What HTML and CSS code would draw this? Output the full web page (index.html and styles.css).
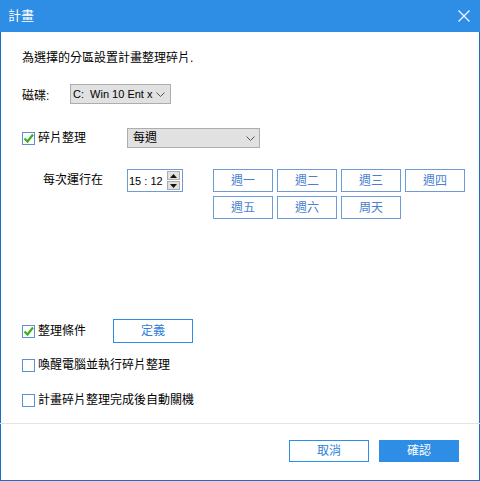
FILE: index.html
```html
<!DOCTYPE html>
<html lang="zh-Hant">
<head>
<meta charset="utf-8">
<title>計畫</title>
<link rel="stylesheet" href="styles.css">
</head>
<body>
<div class="window">
  <div class="titlebar">
    <span class="title">計畫</span>
    <svg class="close" width="12" height="12" viewBox="0 0 12 12"><path d="M0.5 0.5 L11.5 11.5 M11.5 0.5 L0.5 11.5" stroke="#fff" stroke-width="1.2" fill="none"/></svg>
  </div>
  <div class="content">
    <div class="intro">為選擇的分區設置計畫整理碎片.</div>
    <div class="row disk-row">
      <span class="disk-label">磁碟:</span>
      <div class="select disk-select">
        <span class="sel-text">C:&nbsp; Win 10 Ent x</span>
        <svg class="chev" width="9" height="5" viewBox="0 0 9 5"><path d="M0.5 0.5 L4.5 4.5 L8.5 0.5" stroke="#555" stroke-width="1" fill="none"/></svg>
      </div>
    </div>
    <div class="row defrag-row">
      <label class="check first-col">
        <span class="box"><svg width="13" height="13" viewBox="0 0 13 13"><path d="M2.5 6.5 L5.5 9.5 L11 2.5" stroke="#3cb01d" stroke-width="2.2" fill="none"/></svg></span>
        <span>碎片整理</span>
      </label>
      <div class="select freq-select">
        <span class="sel-text">每週</span>
        <svg class="chev" width="9" height="5" viewBox="0 0 9 5"><path d="M0.5 0.5 L4.5 4.5 L8.5 0.5" stroke="#555" stroke-width="1" fill="none"/></svg>
      </div>
    </div>
    <div class="row sched-row">
      <span class="run-label">每次運行在</span>
      <div class="spinner">
        <span class="time">15 : 12</span>
        <div class="spin-btns">
          <span class="spin up"><svg width="7" height="4" viewBox="0 0 7 4"><path d="M3.5 0 L7 4 L0 4 Z" fill="#111"/></svg></span>
          <span class="spin down"><svg width="7" height="4" viewBox="0 0 7 4"><path d="M0 0 L7 0 L3.5 4 Z" fill="#111"/></svg></span>
        </div>
      </div>
      <div class="days">
        <span class="day">週一</span>
        <span class="day">週二</span>
        <span class="day">週三</span>
        <span class="day">週四</span>
        <span class="day">週五</span>
        <span class="day">週六</span>
        <span class="day">周天</span>
      </div>
    </div>
    <div class="row cond-row">
      <label class="check">
        <span class="box"><svg width="13" height="13" viewBox="0 0 13 13"><path d="M2.5 6.5 L5.5 9.5 L11 2.5" stroke="#3cb01d" stroke-width="2.2" fill="none"/></svg></span>
        <span>整理條件</span>
      </label>
      <span class="btn-outline define">定義</span>
    </div>
    <label class="check opt wake">
      <span class="box"></span>
      <span>喚醒電腦並執行碎片整理</span>
    </label>
    <label class="check opt shutdown">
      <span class="box"></span>
      <span>計畫碎片整理完成後自動關機</span>
    </label>
  </div>
  <div class="footer">
    <span class="btn-outline">取消</span>
    <span class="btn-primary">確認</span>
  </div>
</div>
</body>
</html>
```

FILE: styles.css
```css
* { box-sizing: border-box; }
html, body { margin: 0; padding: 0; background: #fff; }
body {
  font-family: "Liberation Sans", "Noto Sans CJK TC", sans-serif;
  font-size: 12px;
  color: #000;
}
.window {
  width: 480px;
  height: 481px;
  border: 1px solid #1b6fc5;
  border-top: none;
  display: flex;
  flex-direction: column;
  background: #fff;
}
.titlebar {
  height: 32px;
  margin: 0 -1px;
  background: #2e8de4;
  display: flex;
  align-items: center;
  justify-content: space-between;
  padding: 0 10px 1px 8px;
}
.title {
  color: #fff;
  font-size: 13px;
  line-height: 16px;
}
.close { display: block; }
.content {
  padding-left: 21px;
  display: flex;
  flex-direction: column;
}
.intro {
  margin-top: 18px;
  line-height: 16px;
  height: 16px;
}
.row { display: flex; align-items: center; }
.disk-row { margin-top: 18px; height: 20px; }
.disk-label { width: 48px; }
.select {
  height: 20px;
  background: #e1e1e1;
  border: 1px solid #adadad;
  display: flex;
  align-items: center;
  justify-content: space-between;
  padding: 0 6px 0 5px;
  line-height: 16px;
}
.sel-text { white-space: nowrap; }
.chev { display: block; flex: none; margin-left: 3px; }
.disk-select { width: 101px; padding-left: 2px; padding-right: 5px; }
.disk-select .sel-text { font-size: 11px; }
.defrag-row { margin-top: 24px; height: 20px; }
.first-col { width: 105px; }
.freq-select { width: 133px; padding-right: 4px; }
.check { display: flex; align-items: center; gap: 3px; line-height: 16px; }
.box {
  width: 13px;
  height: 13px;
  border: 1px solid #5e8fd6;
  background: #fff;
  position: relative;
  flex: none;
}
.box svg { position: absolute; left: -1px; top: -1px; }
.sched-row { margin-top: 21px; align-items: flex-start; }
.run-label { width: 84px; margin-left: 21px; line-height: 16px; margin-top: 3px; }
.spinner {
  width: 56px;
  height: 23px;
  border: 1px solid #6f9ad8;
  display: flex;
  align-items: center;
  justify-content: space-between;
  padding: 0 2px 0 1px;
  margin-right: 30px;
}
.time { line-height: 16px; white-space: nowrap; font-size: 11px; }
.spin-btns { display: flex; flex-direction: column; gap: 1px; }
.spin {
  width: 13px;
  height: 9px;
  background: #e1e1e1;
  border: 1px solid #adadad;
  display: flex;
  align-items: center;
  justify-content: center;
}
.spin svg { display: block; }
.days {
  display: grid;
  grid-template-columns: repeat(4, 60px);
  grid-auto-rows: 23px;
  column-gap: 4px;
  row-gap: 4px;
}
.day {
  border: 1px solid #6f9ad8;
  color: #4a7fcf;
  display: flex;
  align-items: center;
  justify-content: center;
  line-height: 16px;
}
.cond-row { margin-top: 100px; height: 24px; }
.cond-row .check { width: 91px; }
.btn-outline {
  width: 80px;
  height: 24px;
  border: 1px solid #2e8de4;
  color: #2e7fd8;
  display: flex;
  align-items: center;
  justify-content: center;
  line-height: 16px;
}
.opt { height: 16px; }
.wake { margin-top: 14px; }
.shutdown { margin-top: 19px; }
.footer {
  margin-top: auto;
  margin-left: -1px;
  margin-right: -1px;
  border-top: 1px solid #e3e3e3;
  padding: 16px 21px 18px 0;
  display: flex;
  justify-content: flex-end;
  gap: 10px;
}
.footer .btn-outline { height: 22px; }
.btn-primary {
  width: 80px;
  height: 22px;
  background: #2e8de4;
  color: #fff;
  display: flex;
  align-items: center;
  justify-content: center;
  line-height: 16px;
}
```
